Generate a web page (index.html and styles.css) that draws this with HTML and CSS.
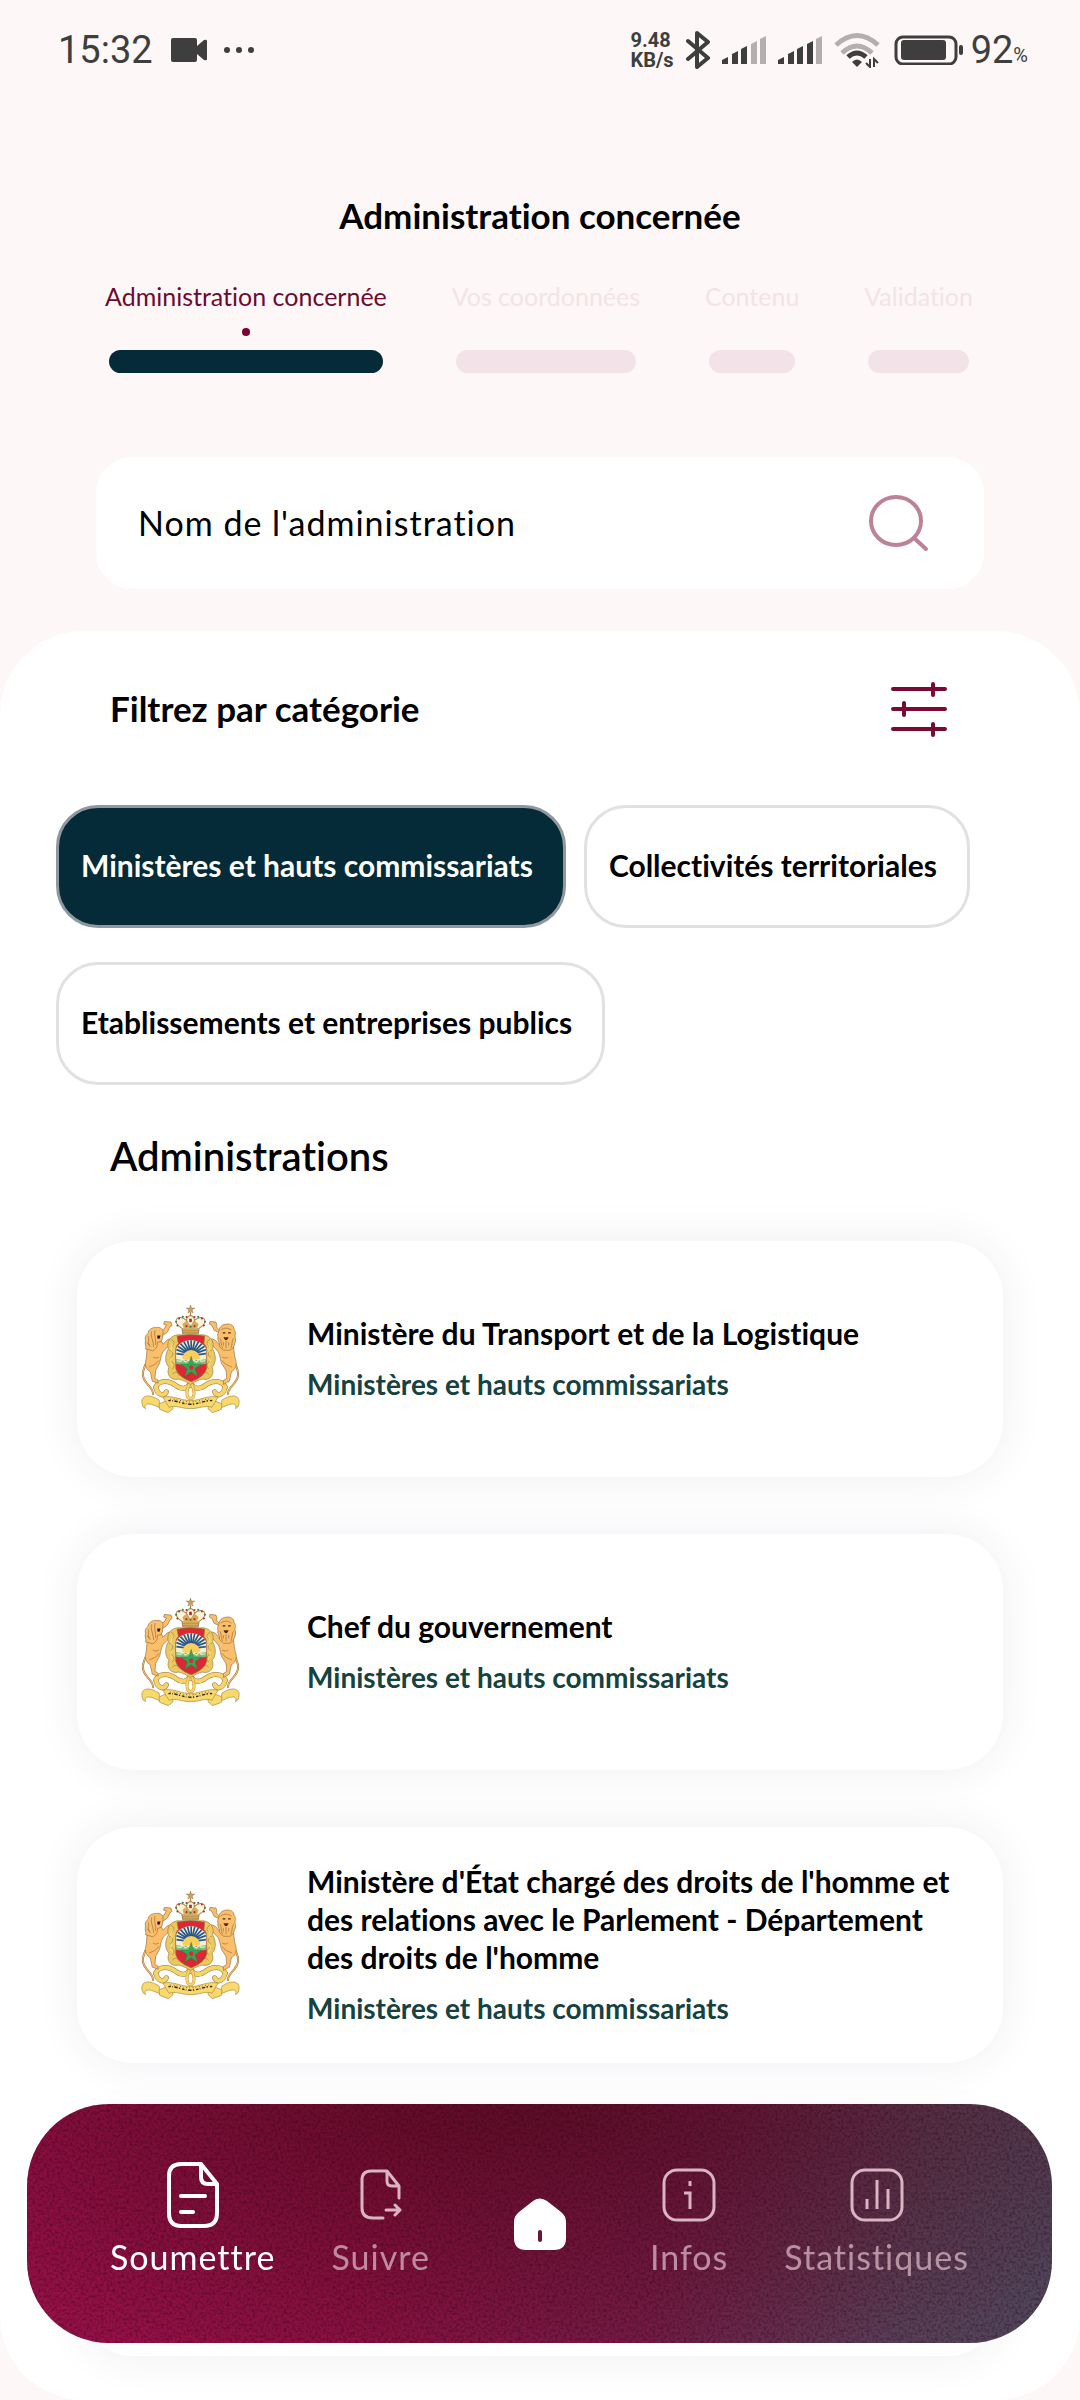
FILE: index.html
```html
<!DOCTYPE html>
<html lang="fr">
<head>
<meta charset="utf-8">
<meta name="viewport" content="width=device-width, initial-scale=1">
<title>Administration concernée</title>
<link rel="stylesheet" href="styles.css">
</head>
<body>
<svg class="defs" aria-hidden="true">
  <defs>
    <symbol id="emblem" viewBox="93 77 294 322">
      <!-- lower scrollwork -->
      <g fill="none" stroke="#8f7a4a" stroke-width="15" stroke-linecap="round">
        <path d="M136 322c12-24 42-20 62-4 14 10 30 12 42-8 12 20 28 18 42 8 20-16 50-20 62 4"/>
        <path d="M138 326c4 18 22 26 30 10M342 326c-4 18-22 26-30 10"/>
      </g>
      <g fill="none" stroke="#f8d468" stroke-width="12" stroke-linecap="round">
        <path d="M136 322c12-24 42-20 62-4 14 10 30 12 42-8 12 20 28 18 42 8 20-16 50-20 62 4"/>
        <path d="M138 326c4 18 22 26 30 10M342 326c-4 18-22 26-30 10"/>
      </g>
      <path d="M240 306c-14 22-14 50 0 50s14-28 0-50" fill="none" stroke="#c79a3c" stroke-width="9"/>
      <path d="M240 306c-14 22-14 50 0 50s14-28 0-50" fill="none" stroke="#f8d468" stroke-width="6"/>
      <!-- left lion -->
      <g fill="#fbbf6b" stroke="#94703f" stroke-width="2" stroke-linejoin="round">
        <path d="M128 345c4-26-30-30-30-62 0-14 6-22 8-30" fill="none" stroke-width="6"/>
        <path d="M128 345c4-26-30-30-30-62 0-14 6-22 8-30" fill="none" stroke="#fbbf6b" stroke-width="3"/>
        <path d="M112 200c-4 20-2 34-6 46-2 14 4 24 14 30l6 28 18 6-2-10-8-4 2-24 12-22c4-14 4-24 10-34l18-18 12-12-6-8-10 2-14 14-6-12z"/>
        <path d="M144 156l18-8 6-12-8-2 2-8 20 2 3 10-6 4-8 16-20 14z"/>
        <path d="M106 208c4-8-4-14 0-26-4-12 4-16 8-22-2-8 14-18 24-16 12-2 22 6 20 16l-2 18-4 8-10 2-2 14-12 12-12-4z"/>
        <path d="M114 170c4 10-4 20 6 32M124 156c-4 14 6 30 6 46M134 152c-4 16 4 26 2 44M110 190l10 8" fill="none"/>
        <path d="M141 168h10l-4 10-6-2z" fill="#2a1a10" stroke="none"/>
        <path d="M116 262c14-6 22-8 30-20M128 232c6 4 10 4 18 0" fill="none"/>
      </g>
      <!-- right lion -->
      <g fill="#fbbf6b" stroke="#94703f" stroke-width="2" stroke-linejoin="round">
        <path d="M352 345c-4-26 30-30 30-62 0-14-6-22-8-30" fill="none" stroke-width="6"/>
        <path d="M352 345c-4-26 30-30 30-62 0-14-6-22-8-30" fill="none" stroke="#fbbf6b" stroke-width="3"/>
        <path d="M368 200c2 20 4 34 8 46 2 14-4 24-14 30l-6 28-18 10 0-12 10-6-2-24-14-22c-4-14-4-24-10-34l-18-20-8-14 8-4 10 4 12 14 8-12z"/>
        <path d="M326 160l-16-8-6-14-8-4 2-8 18 2 3 10-2 4 8 10 12 6z"/>
        <path d="M326 200c4-10-8-14-4-28-4-8 4-16 4-24 4-10 14-14 22-14 10-2 22 4 22 16 8 8 0 18 4 26 2 12-4 18-6 28l-10 8h-20z"/>
        <path d="M330 152c10-8 22-8 32 0M328 176c6 10 2 20 8 30M368 176c-6 10-2 18-8 30M346 184v22M338 188v10M354 188v10" fill="none"/>
        <path d="M336 158h8v4h-8zM352 158h8v4h-8zM338 173h16l-5 8h-6z" fill="#4a2c14" stroke="none"/>
        <path d="M364 262c-14-6-22-8-30-20M352 232c-6 4-10 4-18 0" fill="none"/>
      </g>
      <!-- gold frame -->
      <path d="M200 166c-22 4-32 22-26 42-12 20-10 44 2 54-10 22 6 42 28 36 12 2 24 8 36 16 12-8 24-14 36-16 22 6 38-14 28-36 12-10 14-34 2-54 6-20-4-38-26-42z" fill="#ecc860" stroke="#9a7c3c" stroke-width="2"/>
      <g fill="none" stroke="#a3843f" stroke-width="2">
        <path d="M182 180c10 2 12 14 2 20M176 212c12 0 16 14 4 22M178 246c12-2 18 12 8 22M186 284c6-10 18-8 20 4M298 180c-10 2-12 14-2 20M304 212c-12 0-16 14-4 22M302 246c-12-2-18 12-8 22M294 284c-6-10-18-8-20 4"/>
      </g>
      <g fill="none" stroke="#fdf0b8" stroke-width="2"><path d="M188 192c-8 10-8 20 0 26M186 234c-8 8-6 20 2 24M292 192c8 10 8 20 0 26M294 234c8 8 6 20-2 24"/></g>
      <!-- shield -->
      <path d="M200 170q40-8 82 0l-2 22q8 6 8 18v56q-6 24-46 40-40-16-46-40v-56q0-12 8-18z" fill="#dd2734" stroke="#8f6f30" stroke-width="2"/>
      <path d="M197 242v-34q4-12 14-18 30-18 60 0 12 6 16 18v34z" fill="#f7efd2"/>
      <g stroke="#27588c" stroke-width="5">
        <path d="M242 226v-44M242 226l-11-43M242 226l11-43M242 226l-22-40M242 226l22-40M242 226l-32-34M242 226l32-34M242 226l-40-26M242 226l40-26M242 226l-44-16M242 226l44-16M242 228l-44-6M242 228l44-6"/>
      </g>
      <path d="M215 240a27 29 0 0 1 54 0z" fill="#f9cf5a"/>
      <path d="M197 238q45 10 90 0v14q-45 10-90 0z" fill="#7cbf7a"/>
      <path d="M199 243l12 2 6-6 8 8 8-6 8 6 9-6 8 6 8-8 6 6 12-2" fill="none" stroke="#e9f4d8" stroke-width="3"/>
      <path d="M242 230l7 23h25l-20 14 8 24-20-15-20 15 8-24-20-14h25z" fill="#35a556" stroke="#1d6b38" stroke-width="1"/>
      <path d="M242 256l7 5-3 9h-8l-3-9z" fill="#dd2734"/>
      <!-- crown -->
      <path d="M214 146h52l-3 17h-46z" fill="#e7bd5c" stroke="#7b6033" stroke-width="2"/>
      <path d="M216 152h48M217 158h46" stroke="#8b6a38" stroke-width="2"/>
      <path d="M214 146c-22-12-22-32-4-32 14 0 22 8 28 32M266 146c22-12 22-32 4-32-14 0-22 8-28 32M238 146c-16-20-10-36 2-38 12 2 18 18 2 38" fill="#fbf4dc" stroke="#a98747" stroke-width="3"/>
      <path d="M216 134l12-10 12 14 12-14 12 10-4 12h-40z" fill="#d9aa55"/>
      <g fill="#b5263a"><circle cx="201" cy="138" r="3"/><circle cx="206" cy="117" r="3"/><circle cx="228" cy="113" r="3"/><circle cx="252" cy="113" r="3"/><circle cx="274" cy="117" r="3"/><circle cx="280" cy="138" r="3"/><path d="M236 118h8v10h-8z"/><circle cx="228" cy="140" r="3"/><circle cx="252" cy="140" r="3"/></g>
      <g fill="#2f7a4a"><circle cx="197" cy="127" r="3"/><circle cx="283" cy="127" r="3"/><circle cx="217" cy="112" r="3"/><circle cx="263" cy="112" r="3"/><circle cx="240" cy="142" r="3"/></g>
      <path d="M240 77l3 9h10l-8 6 3 9-8-5-8 5 3-9-8-6h10z" fill="#c9a25a" stroke="#6e5a30" stroke-width="1"/>
      <path d="M240 98v12" stroke="#a98747" stroke-width="4"/>
      <!-- ribbon -->
      <g fill="#f9d86c" stroke="#a58845" stroke-width="2" stroke-linejoin="round">
        <path d="M98 380c-6-16-4-30 14-32 14 0 22 6 34 12l6 24c-16-4-24-12-38-12-8 0-12 6-8 14z"/>
        <path d="M382 380c6-16 4-30-14-32-14 0-22 6-34 12l-6 24c16-4 24-12 38-12 8 0 12 6 8 14z"/>
        <path d="M146 372l38-16 4 30-14 12-16-6-10-4z"/>
        <path d="M334 372l-38-16-4 30 14 12 16-6 10-4z"/>
        <path d="M158 352c26-8 54 10 82 10s56-18 82-10l-18 30c-20-8-36 4-64 4s-44-12-64-4z"/>
      </g>
      <path d="M174 362c22-2 42 11 66 11s44-13 66-11" fill="none" stroke="#2b2418" stroke-width="4" stroke-dasharray="7 4 2 5 10 4 4 6"/>
      <path d="M180 357c20 0 38 9 60 9s40-9 60-9" fill="none" stroke="#2b2418" stroke-width="2" stroke-dasharray="2 8 3 6"/>
    </symbol>
  </defs>
</svg>

<header class="status">
  <div class="status-group">
    <span class="clock">15:32</span>
    <svg class="cam" width="36" height="24" viewBox="0 0 36 24" fill="currentColor" aria-hidden="true"><path d="M2 0h22q2 0 2 2v6l7-6q3-1 3 1v18q0 2-3 1l-7-6v6q0 2-2 2H2q-2 0-2-2V2q0-2 2-2z"/></svg>
    <svg width="32" height="8" viewBox="0 0 32 8" fill="currentColor" aria-hidden="true"><circle cx="4" cy="4" r="3"/><circle cx="16" cy="4" r="3"/><circle cx="28" cy="4" r="3"/></svg>
  </div>
  <div class="status-group">
    <div class="speed"><span>9.48</span><span>KB/s</span></div>
    <svg class="bt" width="24" height="38" viewBox="0 0 24 38" fill="none" stroke="currentColor" stroke-width="4" stroke-linejoin="round" stroke-linecap="round" aria-hidden="true"><path d="M2 10l20 17-11 9V2l11 9L2 28"/></svg>
    <svg class="bars" width="44" height="28" viewBox="0 0 44 28" fill="currentColor" aria-hidden="true"><path d="M0 28v-4l6-3v7zM10 28V18l6-3v13zM19 28V13l6-3v18z"/><path class="off" d="M29 28V8l6-3v23zM38 28V3l6-3v28z"/></svg>
    <svg class="bars" width="44" height="28" viewBox="0 0 44 28" fill="currentColor" aria-hidden="true"><path d="M0 28v-4l6-3v7zM10 28V18l6-3v13zM19 28V13l6-3v18zM29 28V8l6-3v23z"/><path class="off" d="M38 28V3l6-3v28z"/></svg>
    <svg class="wifi" width="46" height="36" viewBox="0 0 46 36" fill="none" stroke="currentColor" stroke-width="5" aria-hidden="true"><path class="off-line" d="M2 13q21-19 42 0M8 21q15-14 30 0"/><path d="M14 25q9-8 18 0"/><path d="M18 30q5-5 10 0l-5 5z" fill="currentColor" stroke="none"/><path d="M36 27v8l-4-4M40 35v-8l4 4" stroke-width="2"/></svg>
    <svg class="batt" width="70" height="30" viewBox="0 0 70 30" aria-hidden="true"><rect x="2" y="2" width="60" height="27" rx="7" fill="none" stroke="currentColor" stroke-width="3"/><rect x="7" y="5" width="45" height="20" rx="3" fill="currentColor"/><rect x="65" y="10" width="4" height="10" rx="2" fill="currentColor"/></svg>
    <span class="clock">92</span><span class="pct">%</span>
  </div>
</header>

<main>
  <h1 class="page-title">Administration concernée</h1>
  <ol class="steps">
    <li class="step step-on" aria-current="step"><span>Administration concernée</span></li>
    <li class="step"><span>Vos coordonnées</span></li>
    <li class="step"><span>Contenu</span></li>
    <li class="step"><span>Validation</span></li>
  </ol>

  <form class="search" role="search">
    <input class="search-input" type="text" placeholder="Nom de l'administration" aria-label="Nom de l'administration">
    <button class="icon-btn" type="button" aria-label="Rechercher">
      <svg width="60" height="58" viewBox="0 0 60 58" fill="none" stroke="#bd8293" stroke-width="4" stroke-linecap="round" aria-hidden="true"><ellipse cx="27" cy="27" rx="25" ry="24"/><path d="M45 44l12 11"/></svg>
    </button>
  </form>

  <div class="sheet">
    <div class="filter-head">
      <h2 class="filter-title">Filtrez par catégorie</h2>
      <button class="icon-btn" type="button" aria-label="Filtres">
        <svg width="58" height="56" viewBox="0 0 58 56" fill="none" stroke="#780a33" stroke-width="4" stroke-linecap="round" aria-hidden="true"><path d="M3 7h52M3 27h52M3 47h52M43 2v11M14 21v12M43 42v11"/></svg>
      </button>
    </div>
    <div class="chips">
      <button class="chip chip-on" type="button" aria-pressed="true">Ministères et hauts commissariats</button>
      <button class="chip" type="button" aria-pressed="false">Collectivités territoriales</button>
      <button class="chip" type="button" aria-pressed="false">Etablissements et entreprises publics</button>
    </div>
    <h2 class="list-title">Administrations</h2>
    <ul class="cards">
      <li class="card">
        <svg class="emblem" aria-hidden="true"><use href="#emblem"/></svg>
        <div class="card-text"><h3>Ministère du Transport et de la Logistique</h3><p>Ministères et hauts commissariats</p></div>
      </li>
      <li class="card">
        <svg class="emblem" aria-hidden="true"><use href="#emblem"/></svg>
        <div class="card-text"><h3>Chef du gouvernement</h3><p>Ministères et hauts commissariats</p></div>
      </li>
      <li class="card">
        <svg class="emblem" aria-hidden="true"><use href="#emblem"/></svg>
        <div class="card-text"><h3>Ministère d'État chargé des droits de l'homme et des relations avec le Parlement - Département des droits de l'homme</h3><p>Ministères et hauts commissariats</p></div>
      </li>
      <li class="card"></li>
    </ul>
  </div>
</main>

<nav class="nav" aria-label="Navigation principale">
  <svg class="grain" aria-hidden="true">
    <filter id="grain" x="0" y="0" width="100%" height="100%" color-interpolation-filters="sRGB"><feTurbulence type="fractalNoise" baseFrequency="0.35" numOctaves="2" seed="4"/><feColorMatrix values="0 0 0 0 0.18  0 0 0 0 0.02  0 0 0 0 0.08  0 2 0 0 -0.8"/></filter>
    <rect width="100%" height="100%" filter="url(#grain)"/>
  </svg>
  <a class="nav-item nav-on" href="#soumettre">
    <svg width="54" height="68" viewBox="0 0 54 68" fill="none" stroke="currentColor" stroke-width="4" stroke-linejoin="round" stroke-linecap="round" aria-hidden="true"><path d="M35 3H15Q3 3 3 15v37q0 13 12 13h23q13 0 13-13V23zM35 3v13q0 7 7 7h9M15 35h24M15 51h12"/></svg>
    <span>Soumettre</span>
  </a>
  <a class="nav-item" href="#suivre">
    <svg width="42" height="52" viewBox="0 0 42 52" fill="none" stroke="currentColor" stroke-width="3" stroke-linejoin="round" stroke-linecap="round" aria-hidden="true"><path d="M39 29V17L27 2H11Q2 2 2 11v28q0 10 11 10h10M27 2v10q0 5 5 5h7M26 41h13M35 36l5 5-5 5"/></svg>
    <span>Suivre</span>
  </a>
  <a class="nav-home" href="#accueil" aria-label="Accueil">
    <svg width="52" height="52" viewBox="0 0 52 52" fill="#fff" aria-hidden="true"><path d="M19 3q7-5 14 0l14 11q5 4 5 10v16q0 12-12 12H12Q0 52 0 40V24q0-6 5-10z"/><path d="M26 34v8" stroke="#6b1535" stroke-width="4" stroke-linecap="round"/></svg>
  </a>
  <a class="nav-item" href="#infos">
    <svg width="54" height="54" viewBox="0 0 54 54" fill="none" stroke="currentColor" stroke-width="3" aria-hidden="true"><rect x="2" y="2" width="50" height="50" rx="13"/><path d="M22 25h6v16M28 13v5"/></svg>
    <span>Infos</span>
  </a>
  <a class="nav-item" href="#statistiques">
    <svg width="54" height="54" viewBox="0 0 54 54" fill="none" stroke="currentColor" stroke-width="3" aria-hidden="true"><rect x="2" y="2" width="50" height="50" rx="13"/><path d="M17 31v10M27 12v29M38 21v20"/></svg>
    <span>Statistiques</span>
  </a>
</nav>
</body>
</html>
```
FILE: styles.css
```css
* { box-sizing: border-box; }
body, h1, h2, h3, p, ol, ul { margin: 0; padding: 0; }
ol, ul { list-style: none; }
svg { display: block; flex: none; }
button, input { font: inherit; color: inherit; }

body {
  background: #fdf7f7;
  color: #000;
  font-family: Lato, "Open Sans", sans-serif;
  font-variant-ligatures: none;
}

.defs { position: absolute; width: 0; height: 0; }

/* status bar */
.status {
  display: flex;
  justify-content: space-between;
  height: 100px;
  padding: 0 52px 0 58px;
  color: #3e3e3e;
  font-family: Roboto, sans-serif;
}
.status-group { display: flex; align-items: center; }
.clock { font-size: 38px; font-weight: 400; line-height: 44px; }
.cam { margin: 0 16px 0 18px; }
.speed {
  display: flex;
  flex-direction: column;
  font-size: 20px;
  font-weight: 700;
  line-height: 20px;
}
.bt { margin-left: 12px; }
.bars, .wifi { margin-left: 12px; }
.batt { margin: 0 7px 0 14px; }
.off { fill: #b3afaf; }
.off-line { stroke: #b3afaf; }
.pct { padding-top: 10px; font-size: 20px; }

/* header of the form */
.page-title {
  margin-top: 93px;
  font-size: 35px;
  font-weight: 700;
  line-height: 44px;
  text-align: center;
}
.steps {
  display: flex;
  justify-content: space-between;
  margin-top: 43px;
  padding: 0 107px 0 105px;
}
.step {
  display: flex;
  flex-direction: column;
  color: #f3e3e8;
  font-size: 25px;
  line-height: 32px;
}
.step::before {
  content: "";
  order: 1;
  width: 8px;
  height: 8px;
  margin: 16px auto 14px;
  border-radius: 4px;
}
.step::after {
  content: "";
  order: 2;
  height: 23px;
  margin: 0 4px;
  border-radius: 12px;
  background: #f3e2e8;
}
.step-on { color: #6d0a30; }
.step-on::before { background: #7d0030; }
.step-on::after { background: #042b37; }

.search {
  display: flex;
  align-items: center;
  height: 132px;
  margin: 84px 96px 0;
  padding: 0 55px 0 42px;
  border-radius: 36px;
  background: #fff;
}
.search-input {
  flex: 1;
  min-width: 0;
  padding: 0;
  border: 0;
  outline: 0;
  background: none;
  font-size: 34px;
  line-height: 40px;
  letter-spacing: 1px;
}
.search-input::placeholder { color: #000; opacity: 1; }
.icon-btn { padding: 0; border: 0; background: none; }

/* white sheet */
.sheet {
  margin-top: 42px;
  padding: 51px 56px 44px;
  border-radius: 84px;
  background: #fff;
}
.filter-head {
  display: flex;
  align-items: center;
  justify-content: space-between;
  padding: 0 76px 0 54px;
}
.filter-title { padding-bottom: 4px; font-size: 35px; font-weight: 700; line-height: 44px; }
.chips {
  display: flex;
  flex-wrap: wrap;
  gap: 34px 18px;
  margin-top: 67px;
}
.chip {
  height: 123px;
  padding: 0 30px 3px 22px;
  border: 3px solid #e3e0e1;
  border-radius: 42px;
  background: #fff;
  font-size: 30px;
  font-weight: 700;
  line-height: 38px;
}
.chip-on { border-color: #8f989e; background: #042b37; color: #fff; }
.list-title {
  margin-top: 48px;
  padding-left: 54px;
  font-size: 40px;
  font-weight: 600;
  line-height: 46px;
}
.cards {
  display: flex;
  flex-direction: column;
  gap: 57px;
  margin: 62px 21px 0;
}
.card {
  display: flex;
  align-items: center;
  gap: 67px;
  min-height: 236px;
  padding: 0 40px 0 64px;
  border-radius: 56px;
  background: #fff;
  box-shadow: 0 0 44px rgba(40, 50, 90, 0.08);
}
.emblem { width: 99px; height: 108px; }
.card-text { display: flex; flex-direction: column; gap: 15px; padding-bottom: 3px; }
.card-text h3 { font-size: 30px; font-weight: 700; line-height: 38px; }
.card-text p { color: #16423f; font-size: 28px; font-weight: 700; line-height: 34px; }

/* bottom navigation, floats over the list */
.nav {
  position: fixed;
  right: 28px;
  bottom: 57px;
  left: 27px;
  display: flex;
  align-items: flex-end;
  justify-content: space-between;
  height: 239px;
  padding: 0 83px 66px;
  overflow: hidden;
  border-radius: 82px;
  background:
    radial-gradient(ellipse 70% 130% at 48% -10%, rgba(74, 8, 24, 0.75), rgba(74, 8, 24, 0)),
    linear-gradient(100deg, #981049 0%, #901245 35%, #781e4b 62%, #584058 85%, #4f475c 100%);
}
.grain { position: absolute; inset: 0; width: 100%; height: 100%; opacity: 0.5; }
.nav-item {
  position: relative;
  display: grid;
  grid-template-rows: 68px 40px;
  row-gap: 8px;
  place-items: center;
  color: #d9b5c3;
  font-size: 34px;
  line-height: 40px;
  letter-spacing: 1px;
  text-decoration: none;
}
.nav-item span { opacity: 0.75; }
.nav-on { color: #fff; }
.nav-on span { opacity: 1; }
.nav-home { position: relative; margin: 0 28px; padding-bottom: 27px; }
```
